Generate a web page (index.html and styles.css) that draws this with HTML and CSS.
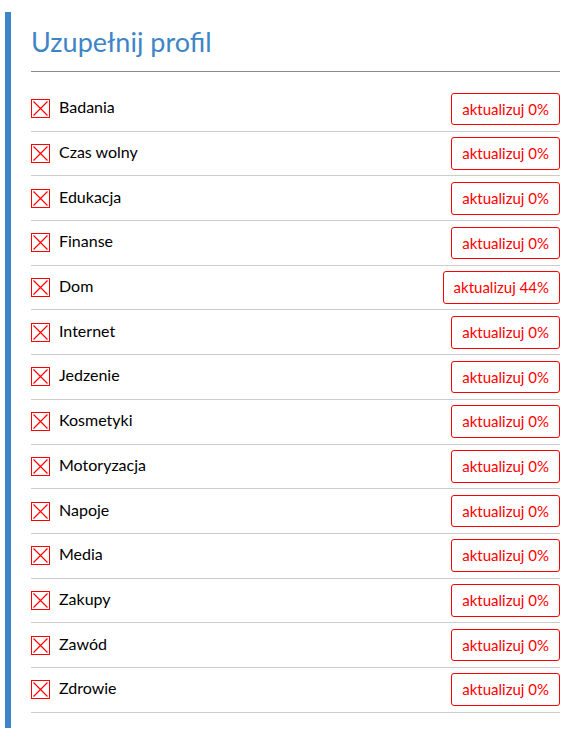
FILE: index.html
```html
<!DOCTYPE html>
<html lang="pl">

<head>
    <meta charset="UTF-8">
    <title>Uzupełnij profil</title>
    <link rel="stylesheet" href="styles.css">
</head>

<body>

    <section class="profil">
        <h1>Uzupełnij profil</h1>

        <ul class="kategorie">
            <li><span class="ikona"></span><span class="nazwa">Badania</span><a class="aktualizuj" href="#">aktualizuj 0%</a></li>
            <li><span class="ikona"></span><span class="nazwa">Czas wolny</span><a class="aktualizuj" href="#">aktualizuj 0%</a></li>
            <li><span class="ikona"></span><span class="nazwa">Edukacja</span><a class="aktualizuj" href="#">aktualizuj 0%</a></li>
            <li><span class="ikona"></span><span class="nazwa">Finanse</span><a class="aktualizuj" href="#">aktualizuj 0%</a></li>
            <li><span class="ikona"></span><span class="nazwa">Dom</span><a class="aktualizuj" href="#">aktualizuj 44%</a></li>
            <li><span class="ikona"></span><span class="nazwa">Internet</span><a class="aktualizuj" href="#">aktualizuj 0%</a></li>
            <li><span class="ikona"></span><span class="nazwa">Jedzenie</span><a class="aktualizuj" href="#">aktualizuj 0%</a></li>
            <li><span class="ikona"></span><span class="nazwa">Kosmetyki</span><a class="aktualizuj" href="#">aktualizuj 0%</a></li>
            <li><span class="ikona"></span><span class="nazwa">Motoryzacja</span><a class="aktualizuj" href="#">aktualizuj 0%</a></li>
            <li><span class="ikona"></span><span class="nazwa">Napoje</span><a class="aktualizuj" href="#">aktualizuj 0%</a></li>
            <li><span class="ikona"></span><span class="nazwa">Media</span><a class="aktualizuj" href="#">aktualizuj 0%</a></li>
            <li><span class="ikona"></span><span class="nazwa">Zakupy</span><a class="aktualizuj" href="#">aktualizuj 0%</a></li>
            <li><span class="ikona"></span><span class="nazwa">Zawód</span><a class="aktualizuj" href="#">aktualizuj 0%</a></li>
            <li><span class="ikona"></span><span class="nazwa">Zdrowie</span><a class="aktualizuj" href="#">aktualizuj 0%</a></li>
        </ul>
    </section>

    <script>
        // krzyzyk w kazdej ikonie
        document.querySelectorAll(".ikona").forEach(ikona => {
            ikona.innerHTML = '<svg width="19" height="19" viewBox="0 0 19 19"><rect x="0.5" y="0.5" width="18" height="18" fill="none" stroke="#f00"/><path d="M2.5 2.5 L16.5 16.5 M16.5 2.5 L2.5 16.5" stroke="#f00" stroke-width="1.2"/></svg>';
        });
    </script>
</body>

</html>
```

FILE: styles.css
```css
body {
    margin: 0;
    background-color: white;
    font-family: Lato, "Liberation Sans", sans-serif;
}

.profil {
    margin: 12px 11px 0 5px;
    padding: 1px 0 15px 20px;
    border-left: 6px solid #3d85c6;
}

h1 {
    margin: 14px 0 0 0;
    padding-bottom: 14px;
    font-size: 27px;
    font-weight: normal;
    line-height: 30px;
    color: #3d85c6;
    border-bottom: 1px solid #888;
}

.kategorie {
    list-style: none;
    margin: 15px 0 0 0;
    padding: 0;
}

.kategorie li {
    display: flex;
    align-items: center;
    padding: 5.55px 0;
    border-bottom: 1px solid #ccc;
}

.ikona {
    width: 19px;
    height: 19px;
    margin-right: 9px;
}

.ikona svg {
    display: block;
}

.nazwa {
    flex: 1;
    font-size: 16px;
    color: #000;
    margin-top: -4px;
}

.aktualizuj {
    display: block;
    padding: 6px 10px;
    font-size: 15px;
    line-height: 18.6px;
    color: #f00;
    text-decoration: none;
    border: 1px solid #f00;
    border-radius: 3px;
}
```
